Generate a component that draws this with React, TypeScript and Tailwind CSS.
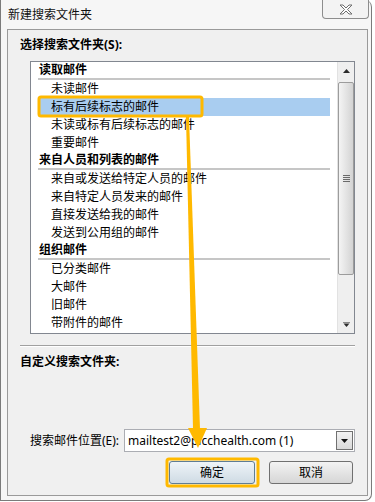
import React from 'react';

const FONT = { fontFamily: '"Noto Sans", "Noto Sans CJK SC", sans-serif' };

interface Row {
  label: string;
  header?: boolean;
  selected?: boolean;
}

const rows: Row[] = [
  { label: '读取邮件', header: true },
  { label: '未读邮件' },
  { label: '标有后续标志的邮件', selected: true },
  { label: '未读或标有后续标志的邮件' },
  { label: '重要邮件' },
  { label: '来自人员和列表的邮件', header: true },
  { label: '来自或发送给特定人员的邮件' },
  { label: '来自特定人员发来的邮件' },
  { label: '直接发送给我的邮件' },
  { label: '发送到公用组的邮件' },
  { label: '组织邮件', header: true },
  { label: '已分类邮件' },
  { label: '大邮件' },
  { label: '旧邮件' },
  { label: '带附件的邮件' },
];

const ListRow: React.FC<{ row: Row }> = ({ row }) => {
  if (row.header) {
    return (
      <div className="h-[18px] flex flex-col">
        <div className="h-[16px] leading-[16px] pl-[1px] font-bold text-black">{row.label}</div>
        <div className="h-[2px] bg-[#c6c6c6]" />
      </div>
    );
  }
  return (
    <div className={`h-[18px] leading-[18px] pl-[13px] text-black ${row.selected ? 'bg-[#a9cdf0]' : ''}`}>
      {row.label}
    </div>
  );
};

const Scrollbar: React.FC = () => (
  <div className="w-[17px] h-full flex flex-col bg-[#efefef] border-l border-[#e2e2e2]">
    <div className="h-[17px] flex items-center justify-center">
      <svg width="7" height="4" viewBox="0 0 7 4">
        <path d="M0 4 L3.5 0 L7 4 Z" fill="#2b2b2b" />
      </svg>
    </div>
    <div className="mt-[3px] h-[193px] w-[16px] rounded-[2px] border border-[#9c9c9c] bg-gradient-to-r from-[#f4f4f4] via-[#e4e4e4] to-[#d3d3d3] flex items-center justify-center">
      <svg width="7" height="7" viewBox="0 0 7 7">
        <path d="M0 0.5 H7 M0 2.5 H7 M0 4.5 H7 M0 6.5 H7" stroke="#6a6a6a" strokeWidth="1" />
      </svg>
    </div>
    <div className="flex-1" />
    <div className="h-[17px] flex items-center justify-center">
      <svg width="7" height="5" viewBox="0 0 7 5">
        <path d="M0 0.5 H7" stroke="#8a8a8a" strokeWidth="1" />
        <path d="M0.5 1.5 L3.5 5 L6.5 1.5 Z" fill="#2b2b2b" />
      </svg>
    </div>
  </div>
);

const Button: React.FC<{ label: string; width: string; primary?: boolean }> = ({ label, width, primary }) => (
  <button
    className={`${width} h-[23px] rounded-[3px] border ${
      primary ? 'border-[#5f7d94] from-[#eef4f8] to-[#cfdbe4]' : 'border-[#707070] from-[#f3f3f3] to-[#d6d6d6]'
    } bg-gradient-to-b text-[12px] text-black leading-[21px]`}
  >
    {label}
  </button>
);

export default function App() {
  return (
    <div className="relative w-[375px] h-[502px] bg-white overflow-hidden text-[12px]" style={FONT}>
      <div className="w-[372px] h-[501px] bg-[#f6f6f6] border border-t-0 border-[#7b7b7b] rounded-br-[7px] rounded-tr-[7px] flex flex-col">
        {/* Title bar */}
        <div className="h-[29px] flex items-start">
          <div className="pl-[7px] pt-[6px] leading-[18px] text-[#111]">新建搜索文件夹</div>
          <div className="ml-auto mr-[2px] w-[47px] h-[19px] border border-t-0 border-[#8d8d8d] rounded-b-[4px] bg-[#f3f3f3] flex items-center justify-center">
            <svg width="14" height="11" viewBox="0 0 14 11">
              <path
                d="M1 1 H4 L7 4 L10 1 H13 L8.5 5.5 L13 10 H10 L7 7 L4 10 H1 L5.5 5.5 Z"
                fill="#fdfdfd"
                stroke="#6e6e6e"
                strokeWidth="1"
                strokeLinejoin="round"
              />
            </svg>
          </div>
        </div>

        {/* Content panel */}
        <div className="ml-[6px] w-[361px] h-[467px] border border-[#9a9a9a] bg-[#f0f0f0] flex flex-col">
          <div className="mt-[6px] ml-[12px] h-[18px] leading-[18px] font-bold text-black">选择搜索文件夹(S):</div>

          {/* Folder list */}
          <div className="mt-[7px] ml-[22px] w-[325px] h-[273px] border border-[#828790] bg-white flex">
            <div className="ml-[7px] w-[292px] flex flex-col">
              {rows.map((r) => (
                <ListRow key={r.label} row={r} />
              ))}
            </div>
            <div className="ml-auto">
              <Scrollbar />
            </div>
          </div>

          <div className="mt-[11px] ml-[12px] w-[335px] h-[2px] border-t border-[#a0a0a0] border-b border-b-white" />

          <div className="mt-[6px] ml-[12px] h-[18px] leading-[18px] font-bold text-black">自定义搜索文件夹:</div>

          {/* Location */}
          <div className="mt-[58px] ml-[22px] h-[23px] flex items-center">
            <div className="w-[94px] text-black">搜索邮件位置(E):</div>
            <div className="w-[231px] h-[23px] border border-[#abadb3] bg-white flex items-center">
              <div className="pl-[3px] flex-1 text-black leading-[21px]">mailtest2@picchealth.com (1)</div>
              <div className="mr-[1px] w-[17px] h-[19px] border border-[#707070] bg-gradient-to-b from-[#f2f2f2] to-[#d9d9d9] flex items-center justify-center">
                <svg width="7" height="4" viewBox="0 0 7 4">
                  <path d="M0 0 L7 0 L3.5 4 Z" fill="#111" />
                </svg>
              </div>
            </div>
          </div>

          {/* Buttons */}
          <div className="mt-[9px] ml-[161px] flex gap-[14px]">
            <Button label="确定" width="w-[86px]" primary />
            <Button label="取消" width="w-[84px]" />
          </div>
        </div>
      </div>

      {/* Annotation overlay */}
      <svg className="absolute left-0 top-0 pointer-events-none" width="375" height="502" viewBox="0 0 375 502">
        <rect x="39" y="97" width="163" height="19" rx="2" fill="none" stroke="#ffb900" strokeWidth="3" />
        <polygon points="186,117 189,117 200,429 193,429" fill="#ffb900" />
        <polygon points="188,428 207,428 198,448" fill="#ffb900" />
        <rect x="167" y="459" width="91" height="27" rx="2" fill="none" stroke="#ffb900" strokeWidth="3" />
      </svg>
    </div>
  );
}
